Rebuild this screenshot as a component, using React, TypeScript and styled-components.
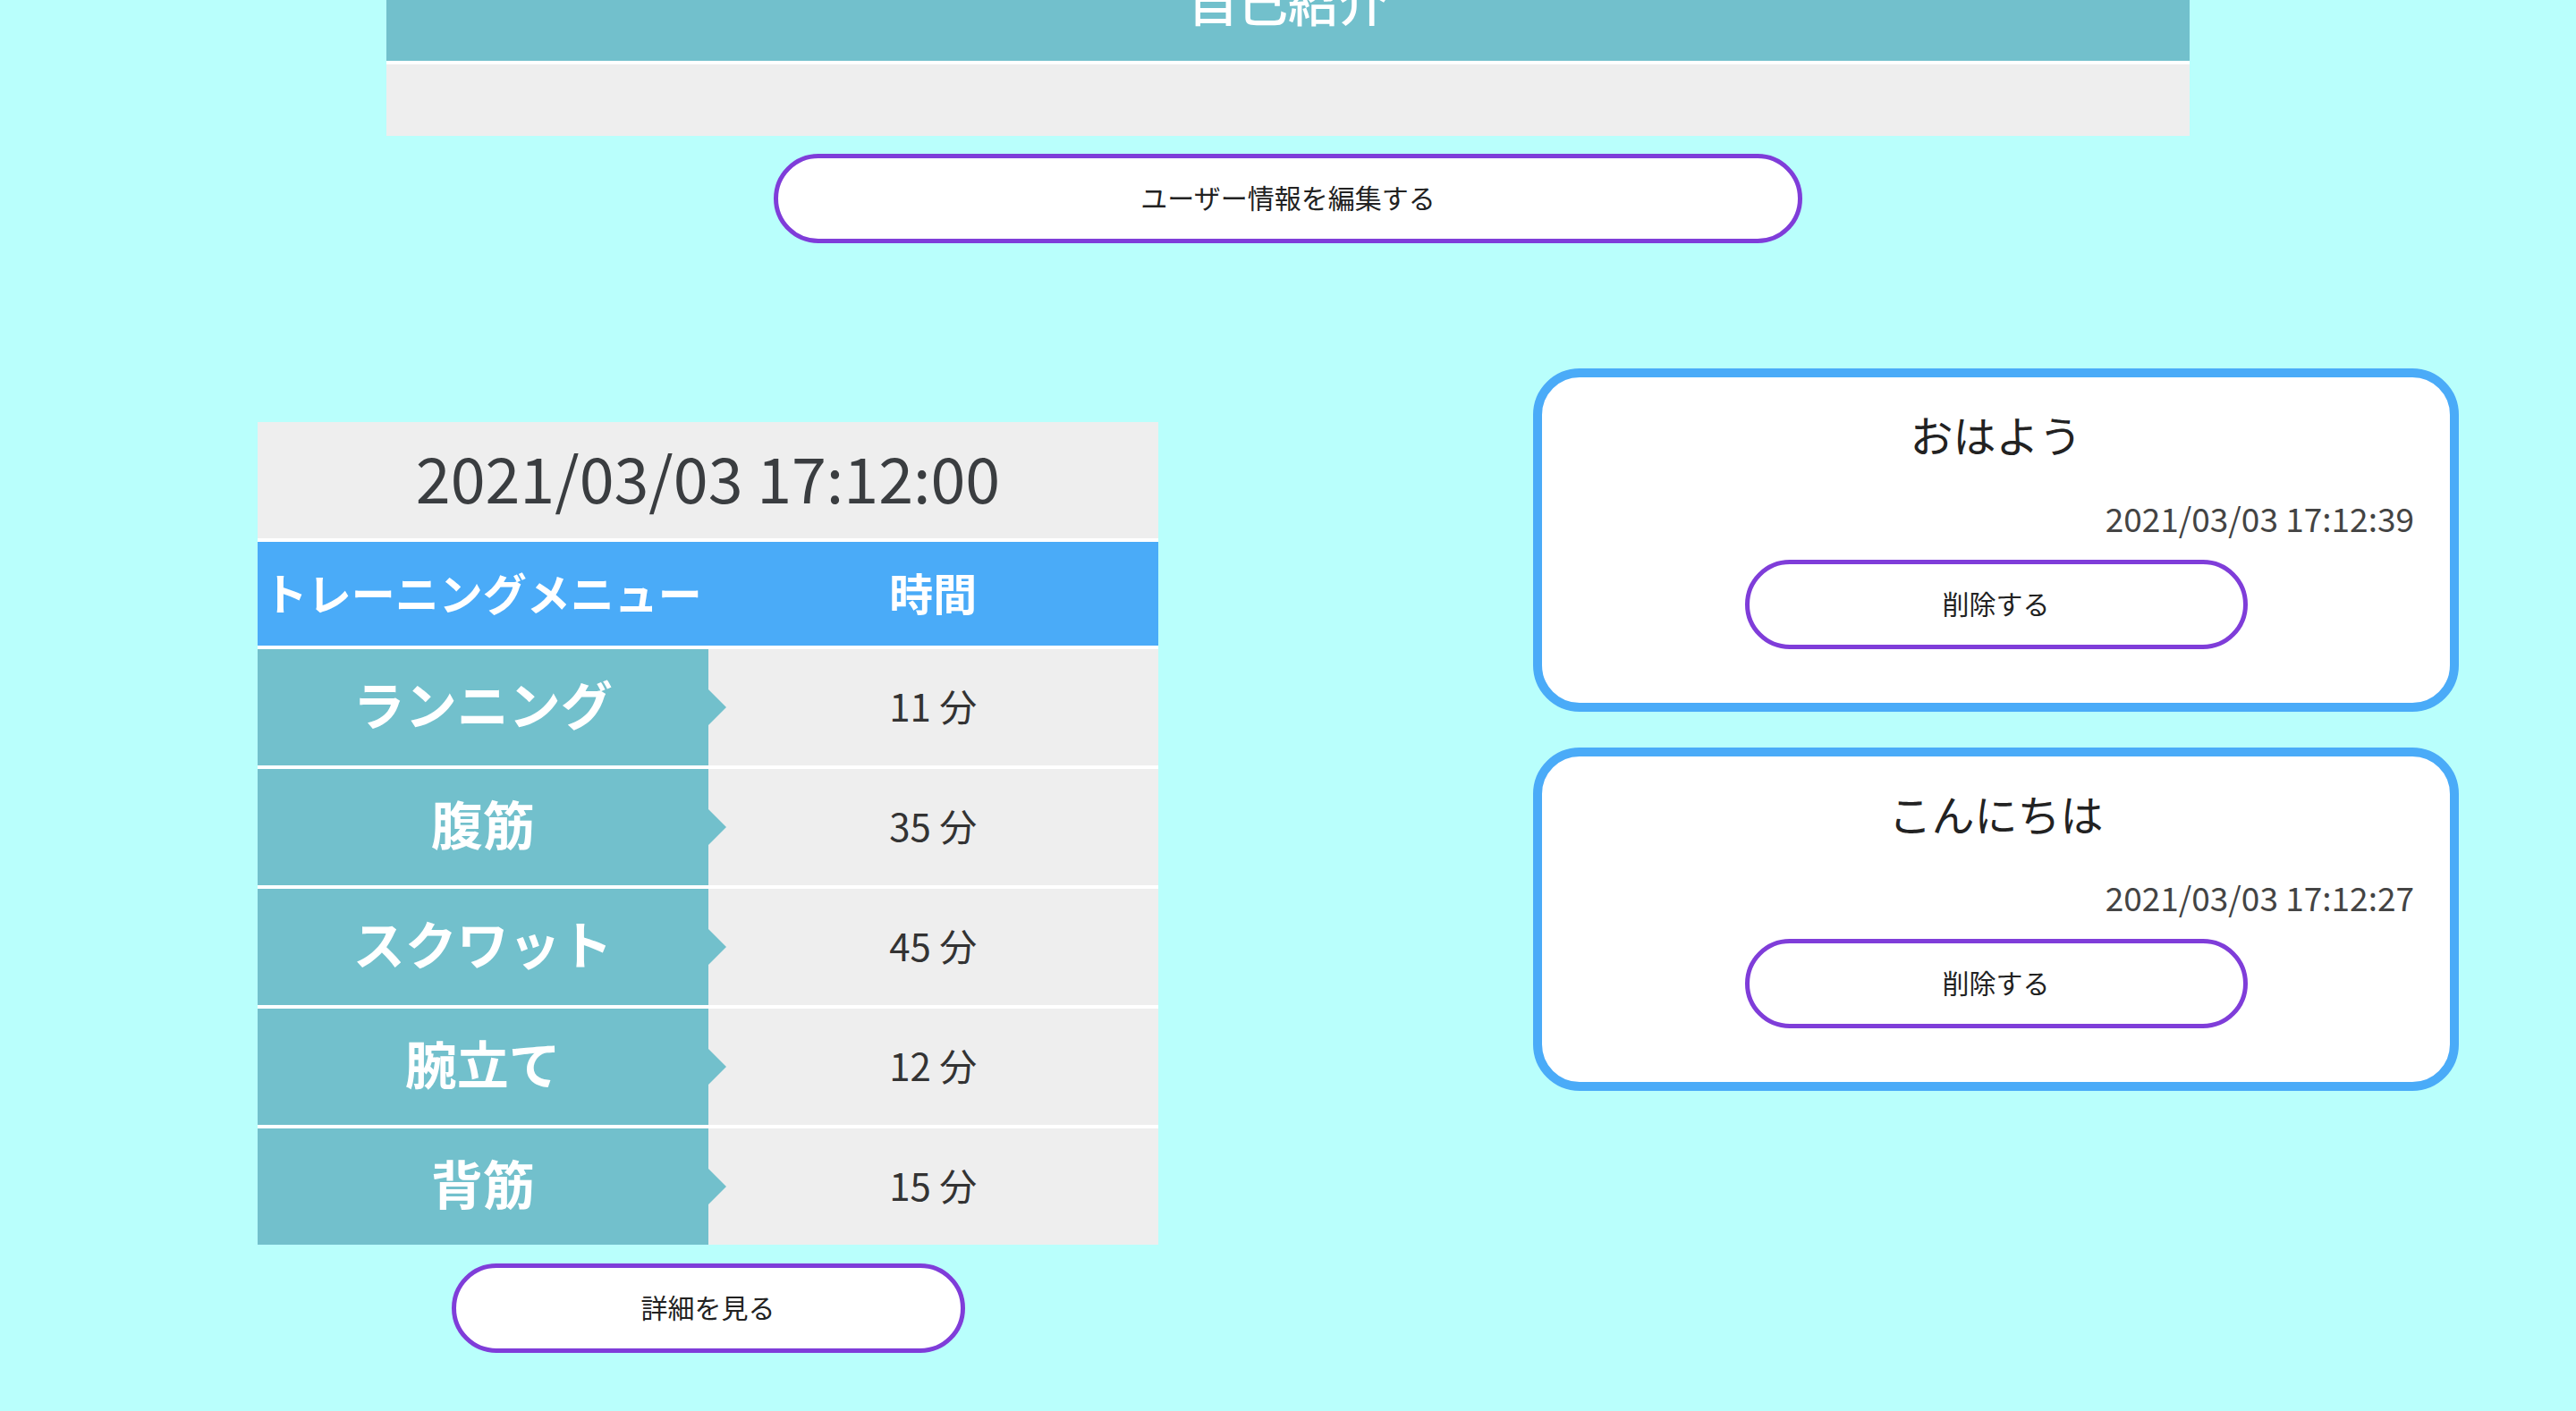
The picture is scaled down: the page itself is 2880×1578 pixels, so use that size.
import React from "react";
import styled, { createGlobalStyle } from "styled-components";

const GlobalStyle = createGlobalStyle`
  html, body { margin: 0; padding: 0; }
  body {
    background: #b9fffc;
    font-family: "Noto Sans CJK JP", "Noto Sans", sans-serif;
  }
  * { box-sizing: border-box; }
`;

const Page = styled.div`
  min-height: 100vh;
  background: #b9fffc;
  padding-bottom: 60px;
`;

const Header = styled.header`
  width: 2016px;
  margin: 0 auto;
`;

const TitleBar = styled.div`
  height: 72px;
  background: #72c0cc;
  border-bottom: 4px solid #ffffff;
  display: flex;
  justify-content: center;
  overflow: hidden;
`;

const Title = styled.h1`
  margin: -30px 0 0;
  font-size: 56px;
  line-height: 60px;
  font-weight: 500;
  color: #ffffff;
`;

const Intro = styled.div`
  height: 80px;
  background: #eeeeee;
`;

const PillButton = styled.button<{ $width: number }>`
  display: block;
  width: ${(p) => p.$width}px;
  height: 100px;
  padding: 0 0 4px;
  border: 5px solid #7f3dd9;
  border-radius: 50px;
  background: #ffffff;
  color: #222222;
  font-family: "Noto Sans CJK JP", "Noto Sans", sans-serif;
  font-size: 30px;
  cursor: pointer;
`;

const EditButton = styled(PillButton)`
  margin: 20px auto 0;
`;

const Main = styled.main`
  display: flex;
  align-items: flex-start;
  gap: 419px;
  padding-left: 288px;
`;

const LeftColumn = styled.section`
  width: 1007px;
  margin-top: 200px;
  display: flex;
  flex-direction: column;
  align-items: center;
`;

const Table = styled.div`
  width: 100%;
  display: flex;
  flex-direction: column;
  gap: 4px;
  background: #ffffff;
`;

const DateHeader = styled.div`
  height: 130px;
  padding-bottom: 10px;
  background: #eeeeee;
  display: flex;
  align-items: center;
  justify-content: center;
  font-size: 70px;
  color: #3a3d40;
`;

const HeadRow = styled.div`
  height: 116px;
  background: #4aabf8;
  display: grid;
  grid-template-columns: 1fr 1fr;
`;

const HeadCell = styled.div`
  display: flex;
  align-items: center;
  justify-content: center;
  padding-bottom: 6px;
  font-size: 49px;
  font-weight: 700;
  color: #ffffff;
  white-space: nowrap;
`;

const Row = styled.div`
  height: 130px;
  display: grid;
  grid-template-columns: 1fr 1fr;
  background: #eeeeee;
`;

const MenuCell = styled.div`
  position: relative;
  background: #72c0cc;
  display: flex;
  align-items: center;
  justify-content: center;
  padding-bottom: 10px;
  font-size: 58px;
  font-weight: 700;
  color: #ffffff;

  &::after {
    content: "";
    position: absolute;
    right: -20px;
    top: 50%;
    margin-top: -20px;
    border-left: 20px solid #72c0cc;
    border-top: 20px solid transparent;
    border-bottom: 20px solid transparent;
  }
`;

const TimeCell = styled.div`
  display: flex;
  align-items: center;
  justify-content: center;
  padding-bottom: 6px;
  font-size: 42px;
  color: #333333;
`;

const DetailButton = styled(PillButton)`
  margin-top: 21px;
`;

const RightColumn = styled.section`
  width: 1035px;
  margin-top: 140px;
  display: flex;
  flex-direction: column;
  gap: 40px;
`;

const Card = styled.article`
  border: 10px solid #4aabf8;
  border-radius: 52px;
  background: #ffffff;
  padding: 27px 40px 60px;
  display: flex;
  flex-direction: column;
  align-items: center;
`;

const CardTitle = styled.h3`
  margin: 0;
  font-size: 48px;
  line-height: 72px;
  font-weight: 400;
  color: #222222;
`;

const CardDate = styled.p`
  align-self: flex-end;
  margin: 31px 0 0;
  font-size: 37px;
  line-height: 54px;
  color: #444444;
`;

const DeleteButton = styled(PillButton)`
  margin-top: 20px;
`;

const menus = [
  { name: "ランニング", time: 11 },
  { name: "腹筋", time: 35 },
  { name: "スクワット", time: 45 },
  { name: "腕立て", time: 12 },
  { name: "背筋", time: 15 },
];

const posts = [
  { text: "おはよう", date: "2021/03/03 17:12:39" },
  { text: "こんにちは", date: "2021/03/03 17:12:27" },
];

export default function App() {
  return (
    <Page>
      <GlobalStyle />
      <Header>
        <TitleBar>
          <Title>自己紹介</Title>
        </TitleBar>
        <Intro />
      </Header>
      <EditButton $width={1150}>ユーザー情報を編集する</EditButton>
      <Main>
        <LeftColumn>
          <Table>
            <DateHeader>2021/03/03 17:12:00</DateHeader>
            <HeadRow>
              <HeadCell>トレーニングメニュー</HeadCell>
              <HeadCell>時間</HeadCell>
            </HeadRow>
            {menus.map((m) => (
              <Row key={m.name}>
                <MenuCell>{m.name}</MenuCell>
                <TimeCell>{m.time} 分</TimeCell>
              </Row>
            ))}
          </Table>
          <DetailButton $width={574}>詳細を見る</DetailButton>
        </LeftColumn>
        <RightColumn>
          {posts.map((p) => (
            <Card key={p.date}>
              <CardTitle>{p.text}</CardTitle>
              <CardDate>{p.date}</CardDate>
              <DeleteButton $width={562}>削除する</DeleteButton>
            </Card>
          ))}
        </RightColumn>
      </Main>
    </Page>
  );
}
